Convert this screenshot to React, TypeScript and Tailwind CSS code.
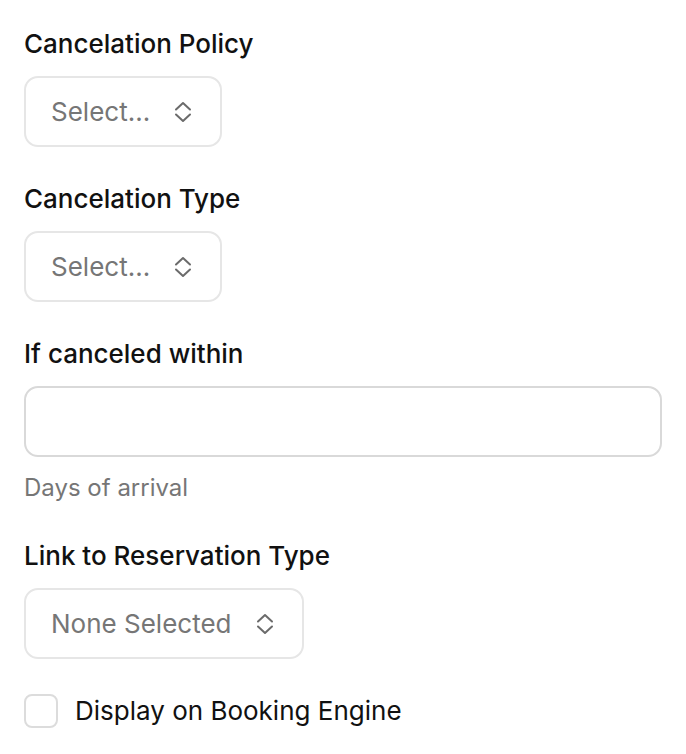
import React from 'react';

function UpDown() {
  return (
    <svg width="22" height="24" viewBox="0 0 22 24" fill="none" stroke="#6b6b6b" strokeWidth="2" strokeLinecap="round" strokeLinejoin="round">
      <path d="M4 9.5 11 3l7 6.5" />
      <path d="M4 14.5 11 21l7-6.5" />
    </svg>
  );
}

function Select({ placeholder }: { placeholder: string }) {
  return (
    <button
      type="button"
      className="inline-flex h-[71px] items-center gap-[22px] rounded-[14px] border-2 border-[#e6e6e6] bg-white pl-[25px] pr-[26px] text-[26px] text-[#767676]"
    >
      <span>{placeholder}</span>
      <UpDown />
    </button>
  );
}

function Label({ children }: { children: React.ReactNode }) {
  return <div className="mb-4 text-[26px] font-medium leading-8 text-[#111111]">{children}</div>;
}

export default function App() {
  return (
    <div className="min-h-screen bg-white px-[24px] pt-7" style={{ fontFamily: 'Inter, "Noto Sans", sans-serif' }}>
      <div className="flex flex-col gap-9">
        <div>
          <Label>Cancelation Policy</Label>
          <Select placeholder="Select..." />
        </div>
        <div>
          <Label>Cancelation Type</Label>
          <Select placeholder="Select..." />
        </div>
        <div>
          <Label>If canceled within</Label>
          <input
            type="text"
            className="h-[71px] w-[638px] rounded-[14px] border-2 border-[#d9d9d9] bg-white px-6 text-[26px] outline-none"
          />
          <div className="mt-[15px] text-[24px] leading-8 text-[#767676]">Days of arrival</div>
        </div>
        <div>
          <Label>Link to Reservation Type</Label>
          <Select placeholder="None Selected" />
          <label className="mt-[32px] flex items-center gap-[17px]">
            <span className="h-[34px] w-[34px] rounded-[8px] border-2 border-[#dcdcdc] bg-white" />
            <span className="text-[26px] text-[#111111]">Display on Booking Engine</span>
          </label>
        </div>
      </div>
    </div>
  );
}
